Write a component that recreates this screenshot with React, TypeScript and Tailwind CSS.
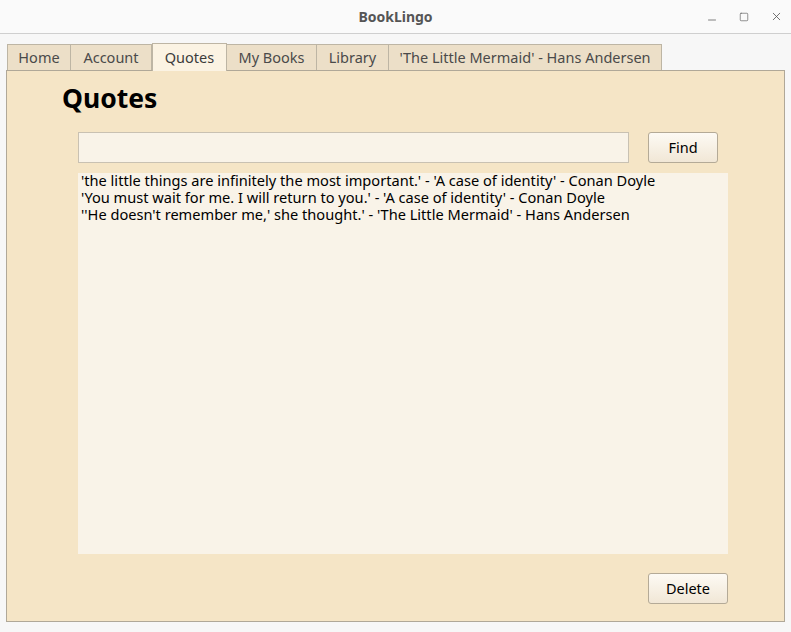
import { Minus, Square, X } from "lucide-react";

const tabs = [
  { t: "Home", w: "w-[64px]" },
  { t: "Account", w: "w-[81px]" },
  { t: "Quotes", w: "w-[75px]" },
  { t: "My Books", w: "w-[90px]" },
  { t: "Library", w: "w-[72px]" },
  { t: "'The Little Mermaid' - Hans Andersen", w: "w-[273px]" },
];

const quotes = [
  "'the little things are infinitely the most important.' - 'A case of identity' - Conan Doyle",
  "'You must wait for me. I will return to you.' - 'A case of identity' - Conan Doyle",
  "''He doesn't remember me,' she thought.' - 'The Little Mermaid' - Hans Andersen",
];

export default function App() {
  return (
    <div className="flex h-[632px] w-[791px] flex-col bg-[#f7f7f7] font-['Noto_Sans',sans-serif] text-[14.5px] text-black">
      <div className="relative flex h-[34px] shrink-0 items-center justify-center border-b border-[#cfcfcf] bg-[#fafafa]">
        <span className="text-[14px] font-bold text-[#555]">BookLingo</span>
        <div className="absolute right-[8px] top-0 flex h-full items-center gap-[21px] text-[#555]">
          <Minus size={12} strokeWidth={1.5} className="mt-[6px]" />
          <Square size={10} strokeWidth={1.5} />
          <X size={13} strokeWidth={1.5} />
        </div>
      </div>

      <div className="flex flex-1 flex-col px-[6px] pt-[9px] pb-[10px]">
        <div className="flex h-[27px] items-end pl-[1px]">
          {tabs.map(({ t, w }) => (
            <div
              key={t}
              className={
                t === "Quotes"
                  ? `relative -mb-px flex h-[28px] items-center justify-center border border-b-0 border-[#bdb5a4] bg-[#fbf3e3] text-[#3c3c3c] ${w}`
                  : `flex h-[26px] items-center justify-center border border-l-0 border-b-0 border-[#bdb5a4] bg-[#ecdfc8] text-[#4a4a4a] first:border-l ${w}`
              }
            >
              {t}
            </div>
          ))}
        </div>
        <div className="flex flex-1 flex-col border border-[#b0a898] bg-[#f5e5c6] pl-[55px] pr-[56px]">
          <h1 className="mt-[12px] h-[30px] text-[26.5px] font-bold leading-[30px]">Quotes</h1>
          <div className="mt-[19px] flex items-center pl-[16px]">
            <input className="h-[31px] w-[551px] border border-[#c9c1b2] bg-[#f9f3e8] px-2 outline-none" />
            <button className="ml-[19px] h-[31px] w-[70px] rounded-[3px] border border-[#b4aa97] bg-gradient-to-b from-[#fdfaf4] to-[#f1e7d6]">
              Find
            </button>
          </div>
          <div className="ml-[16px] mt-[10px] h-[381px] bg-[#f9f3e8] px-[3px] text-[14.6px] leading-[17px]">
            <div className="-mt-[1px]">
              {quotes.map((q) => (
                <div key={q}>{q}</div>
              ))}
            </div>
          </div>
          <div className="mt-[19px] flex justify-end">
            <button className="h-[31px] w-[80px] rounded-[3px] border border-[#b4aa97] bg-gradient-to-b from-[#fdfaf4] to-[#f1e7d6]">
              Delete
            </button>
          </div>
        </div>
      </div>
    </div>
  );
}
